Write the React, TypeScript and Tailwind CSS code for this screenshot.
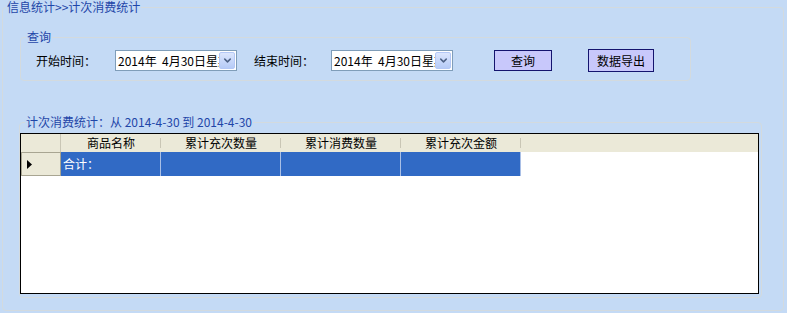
import { ChevronDown } from 'lucide-react';

const font = { fontFamily: '"SimSun","Noto Sans CJK SC",sans-serif' };

const DatePicker = ({ value }: { value: string }) => (
    <div className="flex h-[21px] w-[122px] items-center border border-[#7f9db9] bg-white">
        <span className="flex-1 overflow-hidden whitespace-pre pl-[2px] text-[12px] leading-[15px] text-black">
            {value}
        </span>
        <div className="mr-[1px] flex h-[17px] w-[16px] shrink-0 items-center justify-center rounded-[2px] border border-[#b4c8f6] bg-gradient-to-b from-[#dce6fd] to-[#b6cbf7]">
            <ChevronDown size={11} strokeWidth={3.2} className="text-[#4d6185]" />
        </div>
    </div>
);

const columns = [
    { label: '商品名称', width: 'w-[100px]' },
    { label: '累计充次数量', width: 'w-[120px]' },
    { label: '累计消费数量', width: 'w-[120px]' },
    { label: '累计充次金额', width: 'w-[120px]' }
];

export default function App() {
    return (
        <div className="h-[313px] w-[787px] overflow-hidden bg-[#c4daf5] pl-[2px] text-[12px]" style={font}>
            <fieldset className="h-[311px] w-[782px] rounded-[4px] border border-[#d3dade]">
                <legend className="ml-[3px] px-[1px] text-[12px] leading-[14px] text-[#1f46a8]">
                    信息统计&gt;&gt;计次消费统计
                </legend>

                {/* 查询 */}
                <fieldset className="ml-[17px] mt-[16px] h-[51px] w-[671px] rounded-[4px] border border-[#d3dade]">
                    <legend className="ml-[5px] px-[1px] text-[12px] leading-[14px] text-[#1f46a8]">查询</legend>
                    <div className="flex items-center pl-[15px] pt-[5px]">
                        <span className="w-[79px] leading-[14px] text-black">开始时间：</span>
                        <DatePicker value="2014年  4月30日星期五" />
                        <span className="ml-[17px] w-[77px] leading-[14px] text-black">结束时间：</span>
                        <DatePicker value="2014年  4月30日星期五" />
                        <button className="ml-[41px] h-[21px] w-[58px] border border-[#14146e] bg-[#c8c8fb] leading-[14px] text-black">
                            查询
                        </button>
                        <button className="ml-[36px] h-[23px] w-[66px] border border-[#14146e] bg-[#c8c8fb] leading-[14px] text-black">
                            数据导出
                        </button>
                    </div>
                </fieldset>

                {/* 统计结果 */}
                <fieldset className="ml-[16px] mt-[34px] h-[183px] w-[743px] rounded-[4px] border border-[#d3dade]">
                    <legend className="ml-[5px] px-[1px] text-[12px] leading-[14px] text-[#1f46a8]">
                        计次消费统计：从 2014-4-30 到 2014-4-30
                    </legend>
                    <div className="mt-[4px] h-[161px] w-[739px] border border-black bg-white">
                        <div className="flex h-[18px] bg-[#ebe9d8]">
                            <div className="w-[40px] border-r border-[#c9c6b5]" />
                            {columns.map((col) => (
                                <div
                                    key={col.label}
                                    className={`${col.width} relative flex items-center justify-center leading-[14px] text-black`}
                                >
                                    {col.label}
                                    <span className="absolute right-0 top-[4px] h-[10px] w-[1px] bg-[#c9c6b5]" />
                                </div>
                            ))}
                        </div>
                        <div className="flex h-[24px]">
                            <div className="flex w-[40px] items-center border border-[#a8a592] bg-[#ebe9d8] pl-[5px]">
                                <svg width="5" height="9" viewBox="0 0 5 9">
                                    <path d="M0 0 L5 4.5 L0 9 Z" fill="#000" />
                                </svg>
                            </div>
                            {columns.map((col, i) => (
                                <div
                                    key={col.label}
                                    className={`${col.width} flex items-center border-r border-[#a9bfe6] bg-[#316ac5] pl-[2px] leading-[14px] text-white`}
                                >
                                    {i === 0 ? '合计：' : ''}
                                </div>
                            ))}
                        </div>
                    </div>
                </fieldset>
            </fieldset>
        </div>
    );
}
